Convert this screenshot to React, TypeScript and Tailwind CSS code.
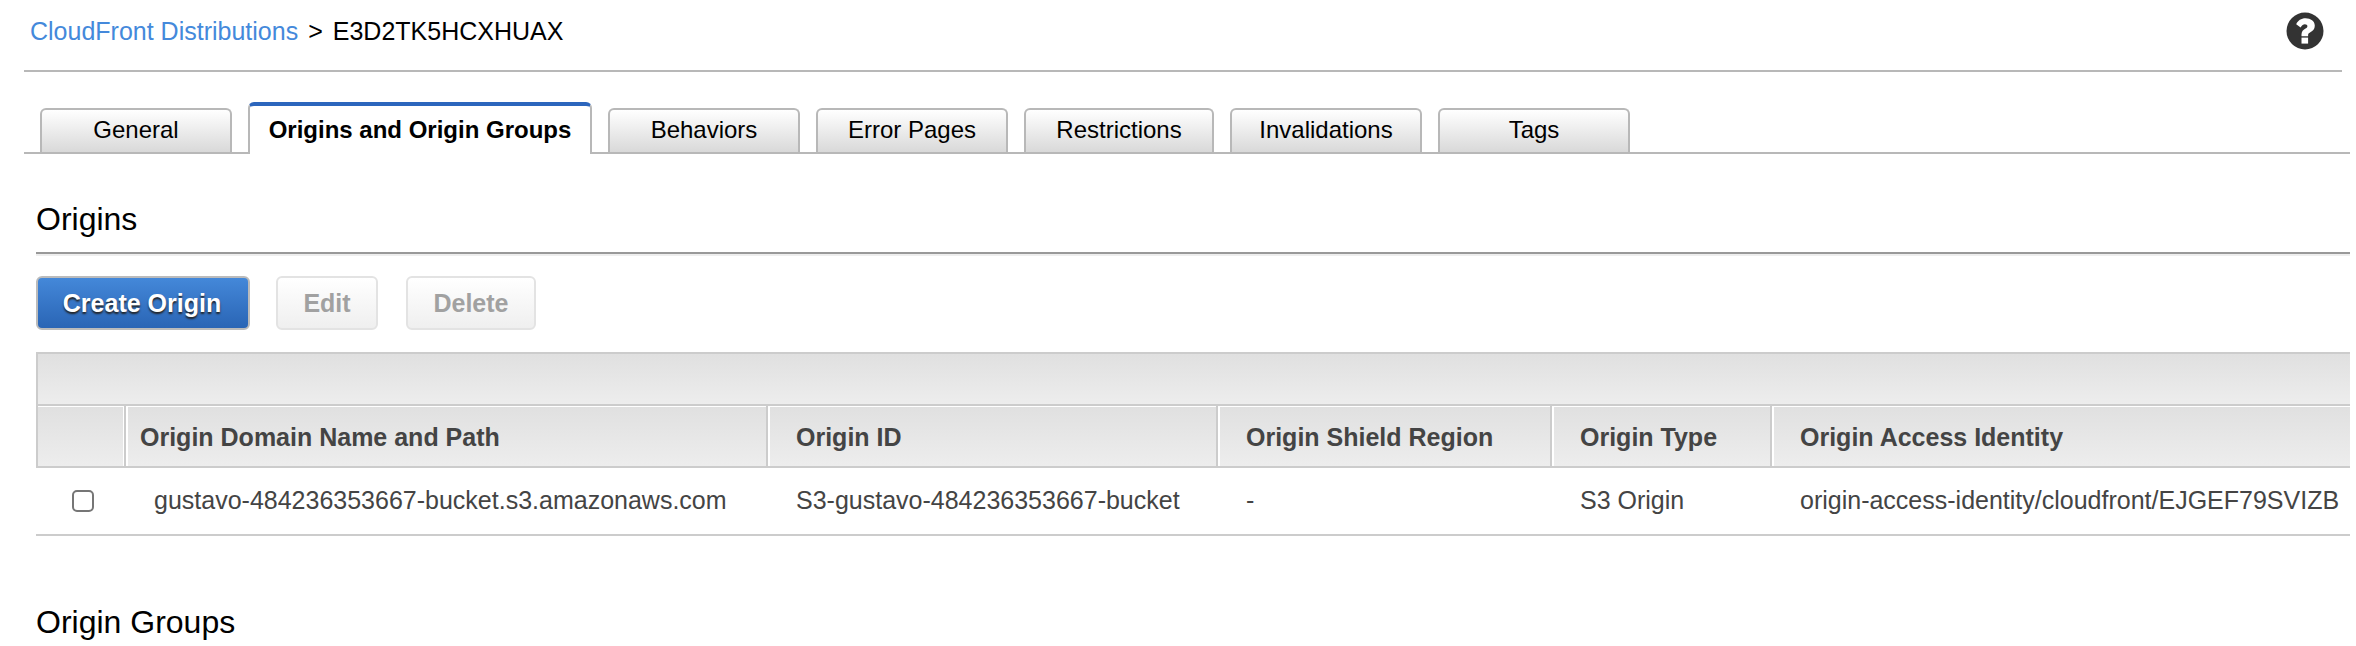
import React from "react";

type Tab = { label: string; width: string; active?: boolean };

const tabs: Tab[] = [
  { label: "General", width: "w-48" },
  { label: "Origins and Origin Groups", width: "w-[344px]", active: true },
  { label: "Behaviors", width: "w-48" },
  { label: "Error Pages", width: "w-48" },
  { label: "Restrictions", width: "w-[190px]" },
  { label: "Invalidations", width: "w-48" },
  { label: "Tags", width: "w-48" },
];

const columns = [
  { label: "Origin Domain Name and Path", width: "w-[642px]", pad: "pl-[14px]" },
  { label: "Origin ID", width: "w-[450px]", pad: "pl-7" },
  { label: "Origin Shield Region", width: "w-[334px]", pad: "pl-7" },
  { label: "Origin Type", width: "w-[220px]", pad: "pl-7" },
  { label: "Origin Access Identity", width: "", pad: "pl-7" },
];

const origin = [
  "gustavo-484236353667-bucket.s3.amazonaws.com",
  "S3-gustavo-484236353667-bucket",
  "-",
  "S3 Origin",
  "origin-access-identity/cloudfront/EJGEF79SVIZB",
];

function HelpIcon() {
  return (
    <svg viewBox="0 0 38 38" className="size-[38px]" aria-hidden="true">
      <circle cx="19" cy="19" r="18.5" fill="#333" />
      <path
        d="M10.2 12.200C12 8.500 15 6.300 19.600 6.300c5 0 9.200 2.900 9.200 7.400 0 3.400-2 4.900-4.100 6.200-1.500.9-2.600 1.600-2.600 3v1.300h-6.600v-1.600c0-3.300 1.800-4.700 3.600-5.800 1.400-.9 2.300-1.400 2.300-2.600 0-1.200-1.100-1.900-2.500-1.900-1.700 0-2.800 1-4.300 3.200z"
        fill="#fff"
      />
      <path d="M15.500 25.600h6.600v6h-6.600z" fill="#fff" />
    </svg>
  );
}

export default function App() {
  return (
    <div className="overflow-hidden bg-white pr-1.5 pl-6 font-['Liberation_Sans',Arial,sans-serif] text-black">
      <header className="mr-2 flex items-start justify-between border-b-2 border-[#b8b8b8] pr-[18px] pl-1.5">
        <nav aria-label="Breadcrumb" className="pt-[15px] pb-[23px] text-[25px] leading-8">
          <a href="#distributions" className="text-[#4489db]">
            CloudFront Distributions
          </a>
          <span className="mx-2.5">&gt;</span>
          <span>E3D2TK5HCXHUAX</span>
        </nav>
        <button type="button" aria-label="Help" className="pt-3">
          <HelpIcon />
        </button>
      </header>

      <div role="tablist" className="mt-[30px] flex items-end gap-4 border-b-2 border-[#b8b8b8] pl-4">
        {tabs.map((tab) => (
          <button
            key={tab.label}
            type="button"
            role="tab"
            aria-selected={!!tab.active}
            className={
              tab.active
                ? `${tab.width} -mb-0.5 h-[52px] shrink-0 rounded-t-md border-x-2 border-t-4 border-x-[#b8b8b8] border-t-[#2c66bd] bg-white text-2xl font-bold whitespace-nowrap`
                : `${tab.width} h-11 shrink-0 rounded-t-md border-x-2 border-t-2 border-[#b8b8b8] bg-linear-to-b from-white to-[#d9d9d9] pb-0.5 text-2xl whitespace-nowrap`
            }
          >
            {tab.label}
          </button>
        ))}
      </div>

      <main className="pl-3">
        <h2 className="pt-[45px] pb-[13px] text-[32px] leading-10">Origins</h2>
        <div className="border-t-2 border-b-2 border-t-[#999] border-b-[#eee]" />

        <div className="mt-5 flex">
          <button
            type="button"
            className="h-[54px] w-[214px] rounded-md border-2 border-[#bbb] bg-linear-to-b from-[#4488d9] to-[#2a65b5] pt-0.5 pr-0.5 text-[25px] font-bold text-white [text-shadow:0_2px_2px_#222]"
          >
            Create Origin
          </button>
          <button
            type="button"
            disabled
            className="ml-[26px] h-[54px] w-[102px] rounded-md border-2 border-[#e3e3e3] bg-linear-to-b from-white to-[#efefef] pt-0.5 text-[25px] font-bold text-[#a1a1a1]"
          >
            Edit
          </button>
          <button
            type="button"
            disabled
            className="ml-7 h-[54px] w-[130px] rounded-md border-2 border-[#e3e3e3] bg-linear-to-b from-white to-[#efefef] pt-0.5 text-[25px] font-bold text-[#a1a1a1]"
          >
            Delete
          </button>
        </div>

        <div className="mt-[22px] overflow-hidden">
          <div className="h-[54px] border-t-2 border-b-2 border-l-2 border-[#ccc] bg-linear-to-b from-[#e0e0e0] to-[#ededed]" />
          <table className="w-full table-fixed border-separate border-spacing-0 text-left whitespace-nowrap text-[#444]">
            <thead>
              <tr>
                <th
                  scope="col"
                  aria-label="Select"
                  className="h-[62px] w-[90px] border-r-2 border-b-2 border-l-2 border-[#ccc] bg-linear-to-b from-[#e0e0e0] to-[#ededed] p-0 shadow-[inset_-1px_1px_0_#fff]"
                />
                {columns.map((c, i) => (
                  <th
                    key={c.label}
                    scope="col"
                    className={`${c.width} ${c.pad} ${i < columns.length - 1 ? "border-r-2" : ""} border-b-2 border-[#ccc] bg-linear-to-b from-[#e0e0e0] to-[#ededed] pt-1 pr-0 pb-0 text-[25px] font-bold shadow-[inset_2px_1px_0_#fff]`}
                  >
                    {c.label}
                  </th>
                ))}
              </tr>
            </thead>
            <tbody>
              <tr>
                <td className="h-[68px] border-b-2 border-[#ccc] p-0 pl-9">
                  <input
                    type="checkbox"
                    aria-label="Select origin"
                    className="block size-[22px] appearance-none rounded-[5px] border-2 border-[#767676] bg-white checked:bg-[#2c66bd]"
                  />
                </td>
                {origin.map((value) => (
                  <td key={value} className="border-b-2 border-[#ccc] py-0 pr-0 pl-7 text-[25px]">
                    {value}
                  </td>
                ))}
              </tr>
            </tbody>
          </table>
        </div>

        <h2 className="pt-[66px] text-[32px] leading-10">Origin Groups</h2>
      </main>
    </div>
  );
}
